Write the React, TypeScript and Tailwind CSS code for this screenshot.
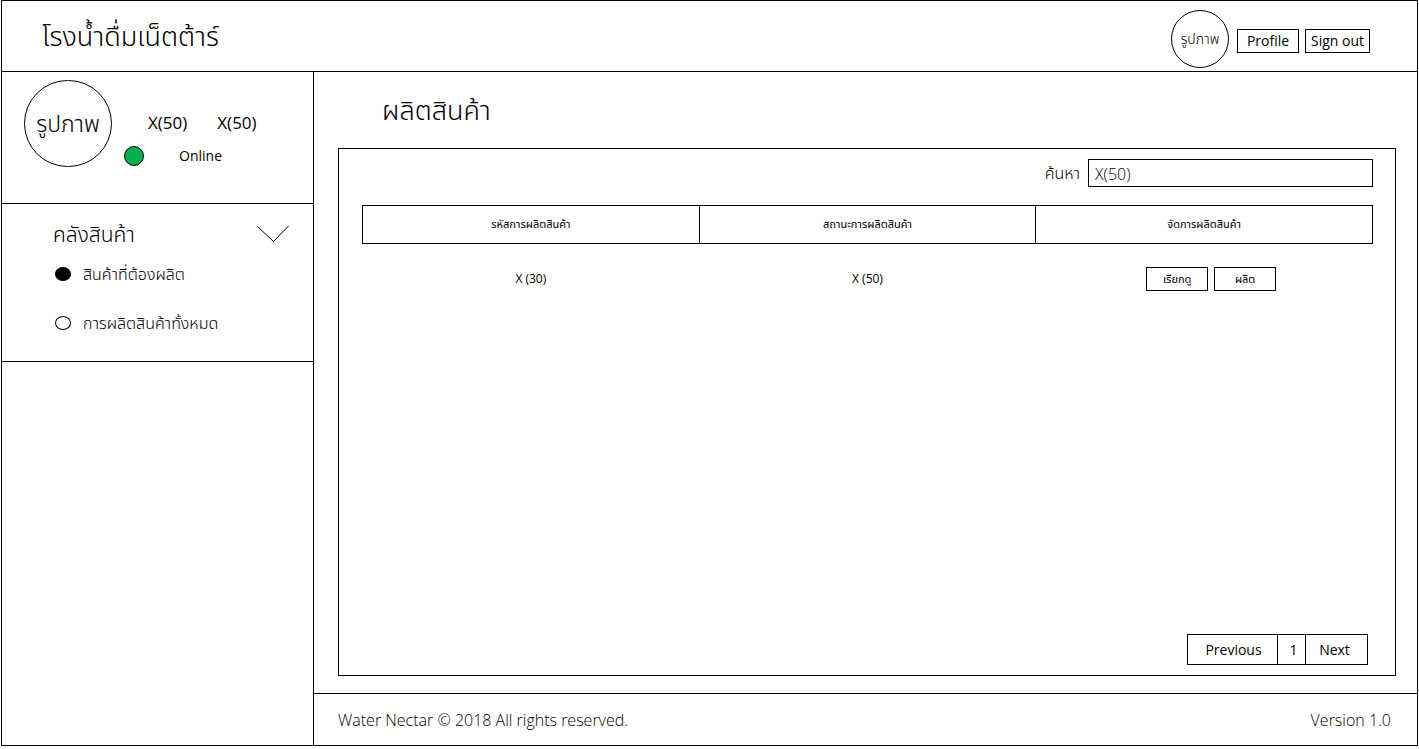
import React, { useState } from "react";

const columns = ["รหัสการผลิตสินค้า", "สถานะการผลิตสินค้า", "จัดการผลิตสินค้า"];
const rows = [{ code: "X (30)", status: "X (50)" }];
const menu = ["สินค้าที่ต้องผลิต", "การผลิตสินค้าทั้งหมด"];

function Header() {
  return (
    <header className="flex h-[71px] shrink-0 items-center justify-between border-b border-black pr-[47px] pl-10">
      <h1 className="text-[27px] leading-10 font-light">โรงน้ำดื่มเน็ตต้าร์</h1>
      <div className="flex items-center pt-1.5">
        <div className="mr-2 flex size-[58px] items-center justify-center rounded-full border border-black text-sm font-light">
          รูปภาพ
        </div>
        <div className="flex gap-1.5 pt-1">
          <button className="h-6 w-[62px] border border-black text-sm leading-5">Profile</button>
          <button className="h-6 w-[65px] border border-black text-sm leading-5">Sign out</button>
        </div>
      </div>
    </header>
  );
}

function Sidebar() {
  const [selected, setSelected] = useState(0);
  return (
    <aside className="w-[312px] shrink-0 border-r border-black">
      <section className="flex h-[132px] border-b border-black pt-2 pl-[22px]">
        <div className="flex h-[87px] w-[88px] items-center justify-center rounded-full border border-black text-[23px] font-light">
          รูปภาพ
        </div>
        <div className="ml-3 pt-[31px]">
          <div className="flex gap-[30px] pl-6 text-[17px] leading-6">
            <span>X(50)</span>
            <span>X(50)</span>
          </div>
          <div className="mt-[11px] flex items-center text-sm leading-5">
            <span className="mr-[35px] size-5 rounded-full border border-black bg-[#00b050]" />
            Online
          </div>
        </div>
      </section>
      <nav className="h-[158px] border-b border-black pt-3">
        <div className="flex h-9 items-center justify-between pr-6 pl-[51px]">
          <h2 className="text-[21px] leading-9 font-light">คลังสินค้า</h2>
          <button aria-label="คลังสินค้า">
            <svg width="32" height="18" viewBox="0 0 32 18" fill="none" stroke="black">
              <path d="M0.5 1.5L16.5 16.5L31.5 1" />
            </svg>
          </button>
        </div>
        <div className="flex flex-col gap-[25px] pt-2.5 pl-[53px]">
          {menu.map((label, i) => (
            <label key={label} className="flex h-6 items-center gap-3 text-base leading-6 font-light">
              <input
                type="radio"
                name="menu"
                checked={selected === i}
                onChange={() => setSelected(i)}
                className="h-3.5 w-4 appearance-none rounded-[50%] border border-black checked:bg-black"
              />
              {label}
            </label>
          ))}
        </div>
      </nav>
    </aside>
  );
}

function ProductionTable() {
  return (
    <table className="mt-[18px] w-full table-fixed border-collapse">
      <thead>
        <tr className="h-[38px]">
          {columns.map((c) => (
            <th key={c} className="border border-black pb-0.5 text-[11px] leading-4 font-normal">
              {c}
            </th>
          ))}
        </tr>
      </thead>
      <tbody>
        {rows.map((r) => (
          <tr key={r.code} className="h-[70px] text-center text-xs">
            <td>{r.code}</td>
            <td>{r.status}</td>
            <td>
              <div className="flex justify-center gap-1.5 pl-3.5 text-[11px] leading-4">
                <button className="h-6 w-[62px] border border-black">เรียกดู</button>
                <button className="h-6 w-[62px] border border-black">ผลิต</button>
              </div>
            </td>
          </tr>
        ))}
      </tbody>
    </table>
  );
}

export default function App() {
  return (
    <div className="flex min-h-screen bg-white px-px pb-[3px] font-['Open_Sans','Noto_Sans_Thai',sans-serif] text-black">
      <div className="flex flex-1 flex-col border border-black">
        <Header />
        <div className="flex flex-1">
          <Sidebar />
          <div className="flex flex-1 flex-col">
            <main className="flex flex-1 flex-col pt-5 pr-[21px] pb-[17px] pl-6">
              <h2 className="pl-11 text-[27px] leading-9 font-light">ผลิตสินค้า</h2>
              <section className="mt-5 flex flex-1 flex-col border border-black pt-2.5 pr-[22px] pb-2.5 pl-[23px]">
                <div className="flex items-center justify-end gap-2">
                  <label htmlFor="search" className="text-base leading-6 font-light">
                    ค้นหา
                  </label>
                  <input
                    id="search"
                    type="text"
                    defaultValue="X(50)"
                    className="h-7 w-[285px] border border-black px-1.5 pt-0.5 text-base font-light"
                  />
                </div>
                <ProductionTable />
                <div className="mt-auto mr-[5px] flex self-end border border-black text-sm leading-5">
                  <button className="h-[29px] w-[90px] border-r border-black pl-0.5">Previous</button>
                  <button className="h-[29px] w-7 border-r border-black pl-1">1</button>
                  <button className="h-[29px] w-[61px] pr-1">Next</button>
                </div>
              </section>
            </main>
            <footer className="flex h-[52px] items-center justify-between border-t border-black pr-[26px] pl-6 text-base leading-6 font-light">
              <span>Water Nectar © 2018 All rights reserved.</span>
              <span>Version 1.0</span>
            </footer>
          </div>
        </div>
      </div>
    </div>
  );
}
